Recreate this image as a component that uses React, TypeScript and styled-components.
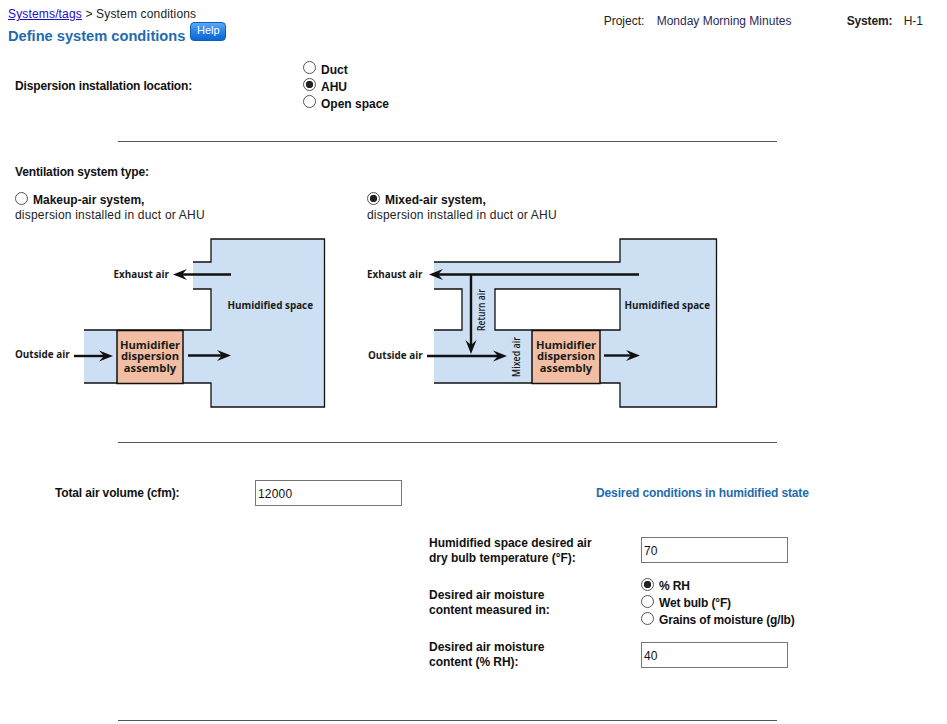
import React from "react";
import styled, { createGlobalStyle } from "styled-components";

const Global = createGlobalStyle`
  html, body { margin: 0; padding: 0; background: #fff; }
  body { font-family: "Liberation Sans", Arial, sans-serif; font-size: 12px; color: #111; }
`;

const Page = styled.div`
  width: 947px;
  height: 724px;
  overflow: hidden;
`;

const Header = styled.header`
  display: flex;
  justify-content: space-between;
  padding: 7px 24px 0 8px;
  height: 38px;
`;

const Crumbs = styled.div`
  letter-spacing: 0.16px;
  line-height: 14px;
  color: #222;
  a { color: #1a0dcc; text-decoration: underline; }
`;

const TitleRow = styled.div`
  display: flex;
  align-items: flex-start;
  margin-top: 1px;
`;

const Title = styled.h1`
  margin: 6px 5px 0 0;
  font-size: 14.65px;
  line-height: 16px;
  font-weight: 700;
  color: #1f6bae;
`;

const HelpButton = styled.button`
  width: 36px;
  height: 19px;
  padding: 0 0 3px;
  border: 1px solid #0f5fb0;
  border-radius: 4px;
  background: linear-gradient(#5fa8f2 0%, #2a85ea 45%, #0c66d6 100%);
  color: #fff;
  font: 11px "Liberation Sans", Arial, sans-serif;
`;

const Meta = styled.div`
  display: flex;
  padding-top: 7px;
  line-height: 14px;
  color: #222;
`;

const MetaLabel = styled.span<{ $bold?: boolean; $w: number }>`
  width: ${(p) => p.$w}px;
  font-weight: ${(p) => (p.$bold ? 700 : 400)};
  letter-spacing: ${(p) => (p.$bold ? "-0.15px" : "0")};
`;

const MetaValue = styled.span<{ $w?: number; $navy?: boolean }>`
  width: ${(p) => (p.$w ? `${p.$w}px` : "auto")};
  color: ${(p) => (p.$navy ? "#2a2a5a" : "#222")};
`;

const LocationRow = styled.section`
  display: flex;
  align-items: center;
  padding: 16px 0 0 15px;
  height: 51px;
`;

const Label = styled.div<{ $w?: number }>`
  letter-spacing: -0.15px;
  font-weight: 700;
  line-height: 15px;
  width: ${(p) => (p.$w ? `${p.$w}px` : "auto")};
  flex: none;
`;

const RadioStack = styled.div<{ $tight?: boolean }>`
  display: flex;
  flex-direction: column;
  line-height: ${(p) => (p.$tight ? "16px" : "18px")};
  letter-spacing: ${(p) => (p.$tight ? "-0.15px" : "0")};
`;

const RadioLine = styled.label`
  display: flex;
  align-items: flex-start;
  height: 16.8px;
  font-weight: 700;
`;

const Radio = styled.input.attrs({ type: "radio" })`
  appearance: none;
  flex: none;
  box-sizing: border-box;
  width: 13px;
  height: 13px;
  margin: 0 5px 0 0;
  border: 1px solid #555;
  border-radius: 50%;
  background: #fff;
  &:checked {
    background: radial-gradient(circle, #222 0 3.4px, #fff 4px);
  }
`;

const Rule = styled.hr<{ $top: number }>`
  width: 659px;
  height: 1px;
  margin: ${(p) => p.$top}px 0 0 118px;
  border: 0;
  background: #555;
`;

const VentTitle = styled.div`
  margin: 23px 0 0 15px;
  letter-spacing: -0.15px;
  font-weight: 700;
  line-height: 14px;
`;

const Systems = styled.section`
  display: flex;
  height: 250px;
  margin-top: 13px;
`;

const SystemColumn = styled.div<{ $w: number; $left: number }>`
  width: ${(p) => p.$w}px;
  padding-left: ${(p) => p.$left}px;
  box-sizing: border-box;
  flex: none;
`;

const SystemHead = styled.div`
  display: flex;
  align-items: flex-start;
  font-weight: 700;
  line-height: 15px;
  height: 15px;
  margin-top: 1px;
  ${Radio} { margin-top: -1px; }
`;

const SystemSub = styled.div`
  letter-spacing: 0.2px;
  line-height: 15px;
  color: #222;
`;

const Diagram = styled.svg`
  display: block;
  margin-top: 9px;
`;

const Volume = styled.section`
  display: flex;
  align-items: center;
  margin-top: 37px;
  padding-left: 55px;
  height: 26px;
`;

const DesiredTitle = styled.div`
  margin-left: 194px;
  letter-spacing: -0.12px;
  font-weight: 700;
  color: #1f6bae;
`;

const Field = styled.input`
  display: block;
  box-sizing: border-box;
  width: 147px;
  height: 26px;
  flex: none;
  padding: 2px 2px 0;
  border: 1px solid #767676;
  font: 12px "Liberation Sans", Arial, sans-serif;
  letter-spacing: 0.2px;
  color: #111;
  background: #fff;
`;

const Conditions = styled.section`
  display: grid;
  grid-template-columns: 212px 160px;
  margin: 30px 0 0 429px;
`;

const CondLabel = styled.div<{ $top?: number }>`
  letter-spacing: -0.03px;
  font-weight: 700;
  line-height: 15px;
  padding-top: ${(p) => p.$top ?? 0}px;
`;

const CondValue = styled.div<{ $h: number; $top?: number }>`
  box-sizing: border-box;
  height: ${(p) => p.$h}px;
  padding-top: ${(p) => p.$top ?? 0}px;
`;

const Ink = "#111";
const Blue = "#cde0f3";
const Peach = "#f1bea3";

const Arrow = ({ x1, y1, x2, y2 }: { x1: number; y1: number; x2: number; y2: number }) => {
  const len = Math.hypot(x2 - x1, y2 - y1);
  const ux = (x2 - x1) / len;
  const uy = (y2 - y1) / len;
  const bx = x2 - ux * 12;
  const by = y2 - uy * 12;
  const nx = bx + ux * 3;
  const ny = by + uy * 3;
  return (
    <g>
      <line x1={x1} y1={y1} x2={nx} y2={ny} stroke={Ink} strokeWidth={2.4} />
      <polygon
        points={`${x2},${y2} ${bx - uy * 5.5 - ux * 2},${by + ux * 5.5 - uy * 2} ${nx},${ny} ${bx + uy * 5.5 - ux * 2},${by - ux * 5.5 - uy * 2}`}
        fill={Ink}
      />
    </g>
  );
};

const DiagramText = styled.text<{ $size?: number }>`
  font-family: "Open Sans", "Noto Sans", sans-serif;
  font-weight: 700;
  font-size: ${(p) => p.$size ?? 9.9}px;
  fill: #1a1a1a;
`;

const SideText = styled(DiagramText)`
  font-weight: 600;
`;

const AssemblyText = ({ x }: { x: number }) => (
  <DiagramText y="348.500" $size={11.2} textAnchor="middle">
    <tspan x={x}>Humidifier</tspan>
    <tspan x={x} dy="11.500">dispersion</tspan>
    <tspan x={x} dy="11.500">assembly</tspan>
  </DiagramText>
);

/* Both viewBoxes use page coordinates, so the drawing can be read against the reference. */
const MakeupDiagram = () => (
  <Diagram width="330" height="180" viewBox="15 232 330 180">
    <path d="M211 239H324.500V407H211V383H84V330H211V289H193V262H211Z" fill={Blue} />
    <path
      d="M193 262H211V239H324.500V407H211V383H84M84 330H211V289H193"
      fill="none"
      stroke={Ink}
      strokeWidth={1.3}
    />
    <rect x="117" y="330.500" width="66" height="53" fill={Peach} stroke={Ink} strokeWidth={1.5} />
    <DiagramText x="113.500" y="277.500">Exhaust air</DiagramText>
    <DiagramText x="227.500" y="309">Humidified space</DiagramText>
    <DiagramText x="15" y="358">Outside air</DiagramText>
    <AssemblyText x={150} />
    <Arrow x1={231} y1={274.5} x2={173} y2={274.5} />
    <Arrow x1={74} y1={356} x2={113} y2={356} />
    <Arrow x1={188} y1={355.5} x2={231} y2={355.5} />
  </Diagram>
);

const MixedDiagram = () => (
  <Diagram width="352" height="180" viewBox="367 232 352 180">
    <path d="M434 262H620V239H716.500V407H620V383H434V330H462V289H434Z" fill={Blue} />
    <rect x="495" y="289" width="125" height="41" fill="#fff" />
    <path
      d="M434 262H620V239H716.500V407H620V383H434M434 289H462V330H434M620 289H495V330H620Z"
      fill="none"
      stroke={Ink}
      strokeWidth={1.3}
    />
    <rect x="532" y="330.500" width="68" height="53" fill={Peach} stroke={Ink} strokeWidth={1.5} />
    <DiagramText x="367" y="277.500">Exhaust air</DiagramText>
    <DiagramText x="624.500" y="309">Humidified space</DiagramText>
    <DiagramText x="368" y="358.500">Outside air</DiagramText>
    <AssemblyText x={566} />
    <SideText $size={11} transform="translate(485 331) rotate(-90)" textLength="42" lengthAdjust="spacingAndGlyphs">Return air</SideText>
    <SideText $size={11} transform="translate(520 377) rotate(-90)" textLength="40" lengthAdjust="spacingAndGlyphs">Mixed air</SideText>
    <Arrow x1={639} y1={274.5} x2={429} y2={274.5} />
    <Arrow x1={471} y1={275} x2={471} y2={354} />
    <Arrow x1={427} y1={356} x2={507} y2={356} />
    <Arrow x1={604} y1={355.5} x2={640} y2={355.5} />
  </Diagram>
);

const Choice = ({ name, label, checked }: { name: string; label: string; checked?: boolean }) => (
  <RadioLine>
    <Radio name={name} defaultChecked={checked} />
    {label}
  </RadioLine>
);

export default function App() {
  return (
    <Page>
      <Global />
      <Header>
        <div>
          <Crumbs>
            <a href="#systems">Systems/tags</a> &gt; System conditions
          </Crumbs>
          <TitleRow>
            <Title>Define system conditions</Title>
            <HelpButton>Help</HelpButton>
          </TitleRow>
        </div>
        <Meta>
          <MetaLabel $w={53}>Project:</MetaLabel>
          <MetaValue $w={190} $navy>Monday Morning Minutes</MetaValue>
          <MetaLabel $w={57} $bold>System:</MetaLabel>
          <MetaValue>H-1</MetaValue>
        </Meta>
      </Header>

      <LocationRow>
        <Label $w={288}>Dispersion installation location:</Label>
        <RadioStack>
          <Choice name="loc" label="Duct" />
          <Choice name="loc" label="AHU" checked />
          <Choice name="loc" label="Open space" />
        </RadioStack>
      </LocationRow>

      <Rule $top={29} />
      <VentTitle>Ventilation system type:</VentTitle>

      <Systems>
        <SystemColumn $w={367} $left={15}>
          <SystemHead>
            <Radio name="sys" />
            Makeup-air system,
          </SystemHead>
          <SystemSub>dispersion installed in duct or AHU</SystemSub>
          <MakeupDiagram />
        </SystemColumn>
        <SystemColumn $w={400} $left={0}>
          <SystemHead>
            <Radio name="sys" defaultChecked />
            Mixed-air system,
          </SystemHead>
          <SystemSub>dispersion installed in duct or AHU</SystemSub>
          <MixedDiagram />
        </SystemColumn>
      </Systems>

      <Rule $top={0} />

      <Volume>
        <Label $w={200}>Total air volume (cfm):</Label>
        <Field defaultValue="12000" />
        <DesiredTitle>Desired conditions in humidified state</DesiredTitle>
      </Volume>

      <Conditions>
        <CondLabel>
          Humidified space desired air
          <br />
          dry bulb temperature (°F):
        </CondLabel>
        <CondValue $h={42} $top={1}>
          <Field defaultValue="70" />
        </CondValue>
        <CondLabel $top={10}>
          Desired air moisture
          <br />
          content measured in:
        </CondLabel>
        <CondValue $h={62}>
          <RadioStack $tight>
            <Choice name="moist" label="% RH" checked />
            <Choice name="moist" label="Wet bulb (°F)" />
            <Choice name="moist" label="Grains of moisture (g/lb)" />
          </RadioStack>
        </CondValue>
        <CondLabel>
          Desired air moisture
          <br />
          content (% RH):
        </CondLabel>
        <CondValue $h={60} $top={2}>
          <Field defaultValue="40" />
        </CondValue>
      </Conditions>

      <Rule $top={20} />
    </Page>
  );
}
